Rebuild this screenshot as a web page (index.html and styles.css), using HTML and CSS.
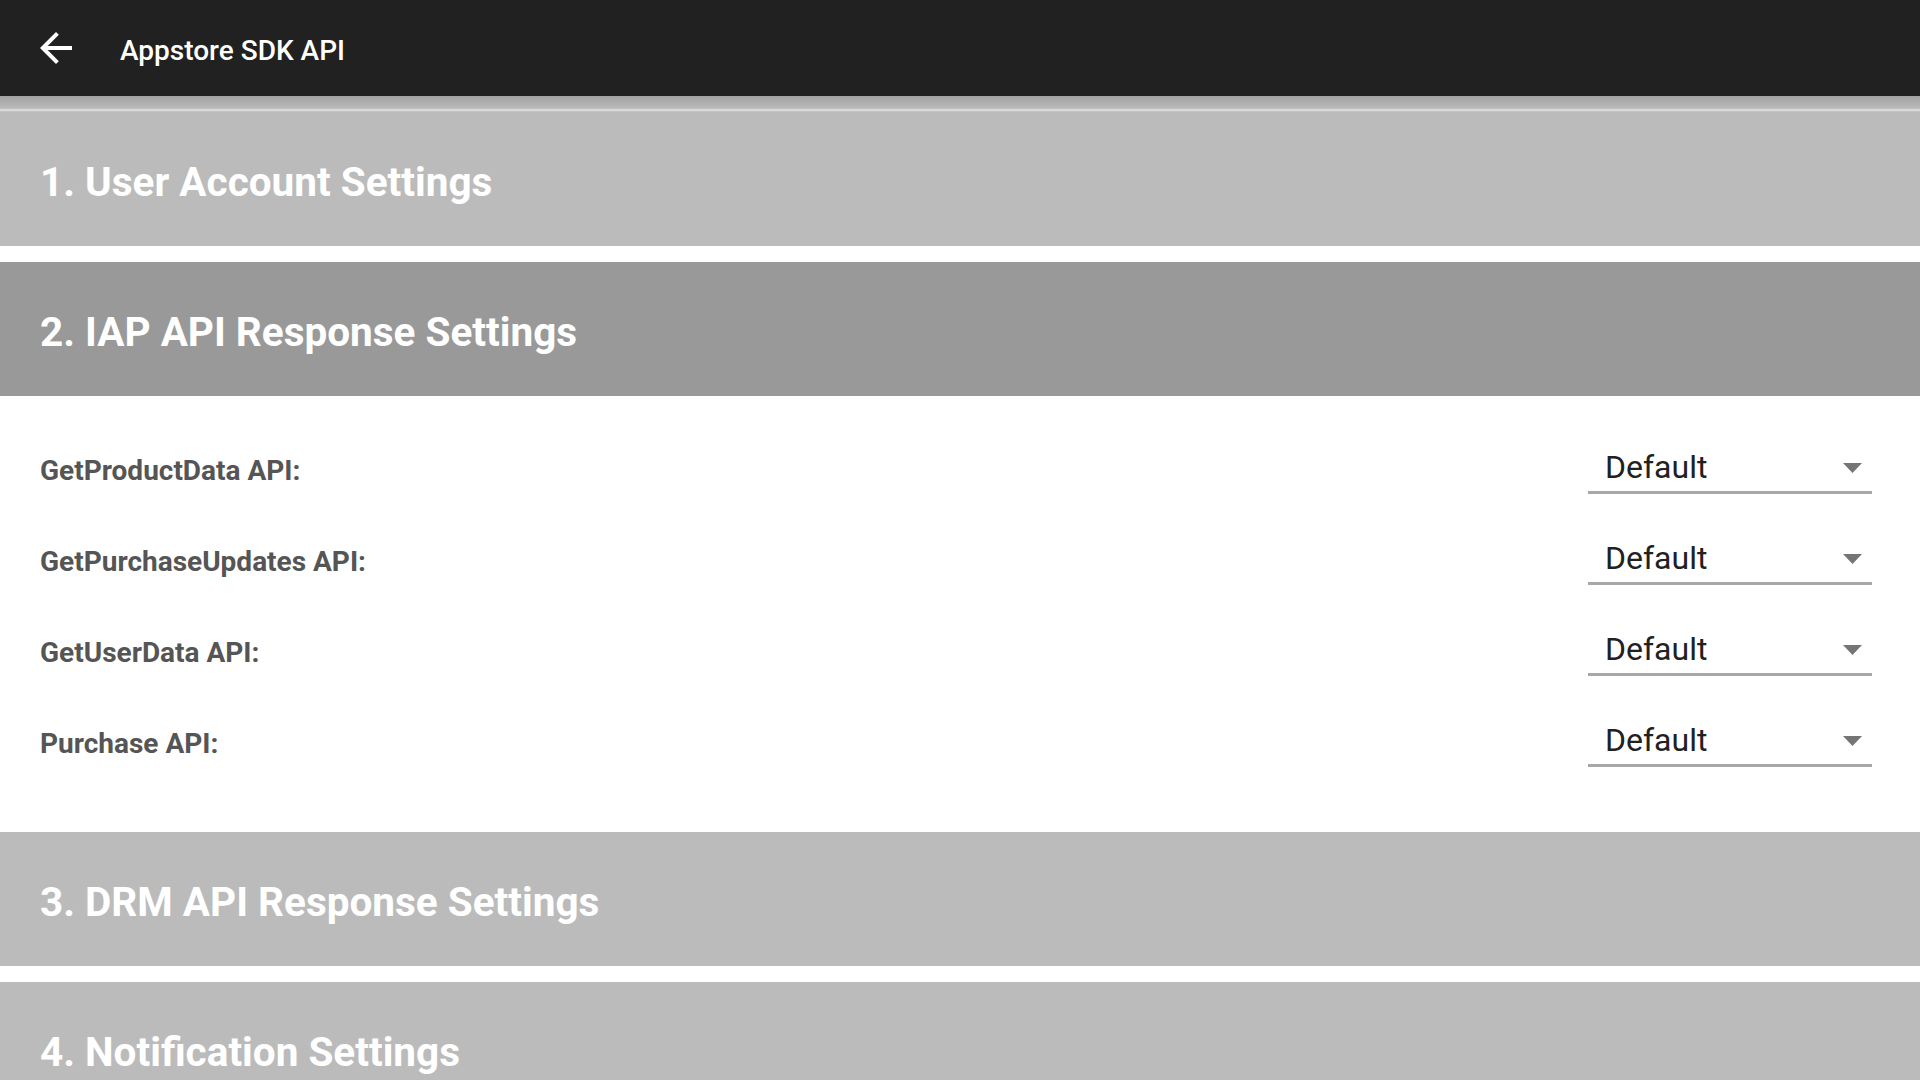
FILE: index.html
```html
<!DOCTYPE html>
<html lang="en">
<head>
<meta charset="utf-8">
<title>Appstore SDK API</title>
<link rel="stylesheet" href="styles.css">
</head>
<body>
<div class="app">
  <header class="toolbar">
    <button class="nav-button" aria-label="Back">
      <svg class="nav-icon" viewBox="0 0 24 24" width="48" height="48"><path d="M20 11H7.83l5.59-5.59L12 4l-8 8 8 8 1.41-1.41L7.83 13H20v-2z" fill="#ffffff"/></svg>
    </button>
    <h1 class="toolbar-title">Appstore SDK API</h1>
  </header>
  <div class="toolbar-shadow"></div>
  <main class="sections">
    <section class="section">
      <h2 class="section-header">1. User Account Settings</h2>
    </section>
    <section class="section">
      <h2 class="section-header section-header-active">2. IAP API Response Settings</h2>
      <div class="section-body">
        <div class="setting-row">
          <span class="setting-label">GetProductData API:</span>
          <div class="spinner"><span class="spinner-value">Default</span><svg class="spinner-arrow" viewBox="0 0 19 10" width="19" height="10"><polygon points="0,0 19,0 9.5,10" fill="#757575"/></svg></div>
        </div>
        <div class="setting-row">
          <span class="setting-label">GetPurchaseUpdates API:</span>
          <div class="spinner"><span class="spinner-value">Default</span><svg class="spinner-arrow" viewBox="0 0 19 10" width="19" height="10"><polygon points="0,0 19,0 9.5,10" fill="#757575"/></svg></div>
        </div>
        <div class="setting-row">
          <span class="setting-label">GetUserData API:</span>
          <div class="spinner"><span class="spinner-value">Default</span><svg class="spinner-arrow" viewBox="0 0 19 10" width="19" height="10"><polygon points="0,0 19,0 9.5,10" fill="#757575"/></svg></div>
        </div>
        <div class="setting-row">
          <span class="setting-label">Purchase API:</span>
          <div class="spinner"><span class="spinner-value">Default</span><svg class="spinner-arrow" viewBox="0 0 19 10" width="19" height="10"><polygon points="0,0 19,0 9.5,10" fill="#757575"/></svg></div>
        </div>
      </div>
    </section>
    <section class="section">
      <h2 class="section-header">3. DRM API Response Settings</h2>
    </section>
    <section class="section">
      <h2 class="section-header">4. Notification Settings</h2>
    </section>
  </main>
</div>
</body>
</html>
```

FILE: styles.css
```css
html, body {
  margin: 0;
  padding: 0;
  background: #ffffff;
}

body {
  font-family: Roboto, "Liberation Sans", Arial, sans-serif;
  width: 1920px;
  height: 1080px;
  overflow: hidden;
}

.app {
  display: flex;
  flex-direction: column;
  height: 1080px;
  overflow: hidden;
}

.toolbar {
  flex: 0 0 96px;
  height: 96px;
  background: #212121;
  display: flex;
  align-items: center;
  padding-left: 32px;
  box-sizing: border-box;
}

.nav-button {
  width: 48px;
  height: 48px;
  padding: 0;
  margin: 0;
  border: none;
  background: transparent;
  display: flex;
  align-items: center;
  justify-content: center;
}

.nav-icon {
  display: block;
}

.toolbar-title {
  margin: 5px 0 0 40px;
  color: #ffffff;
  font-size: 28px;
  font-weight: 500;
  line-height: 1;
}

.toolbar-shadow {
  flex: 0 0 16px;
  height: 16px;
  background: linear-gradient(to bottom, #a3a3a3 0%, #b3b3b3 55%, #bdbdbd 78%, #e0e0e0 86%, #d8d8d8 92%, #b6b6b6 100%);
}

.sections {
  display: flex;
  flex-direction: column;
  gap: 16px;
}

.section {
  display: flex;
  flex-direction: column;
}

.section-header {
  margin: 0;
  height: 134px;
  flex: 0 0 134px;
  display: flex;
  align-items: center;
  padding: 5px 0 0 40px;
  box-sizing: border-box;
  background: #bbbbbb;
  color: #ffffff;
  font-size: 40.5px;
  font-weight: 700;
}

.section-header-active {
  background: #999999;
}

.section-body {
  padding: 29px 0 27px;
  display: flex;
  flex-direction: column;
}

.setting-row {
  height: 91px;
  display: flex;
  align-items: center;
  justify-content: space-between;
  padding: 0 48px 0 40px;
}

.setting-label {
  color: #555555;
  font-size: 28px;
  font-weight: 700;
}

.spinner {
  width: 284px;
  height: 49px;
  box-sizing: border-box;
  border-bottom: 3px solid #a8a8a8;
  display: flex;
  align-items: center;
  justify-content: space-between;
  padding: 0 10px 0 17px;
  margin-top: -3px;
}

.spinner-value {
  color: #212121;
  font-size: 32px;
  font-weight: 400;
  margin-top: -2px;
}

.spinner-arrow {
  display: block;
}
```
